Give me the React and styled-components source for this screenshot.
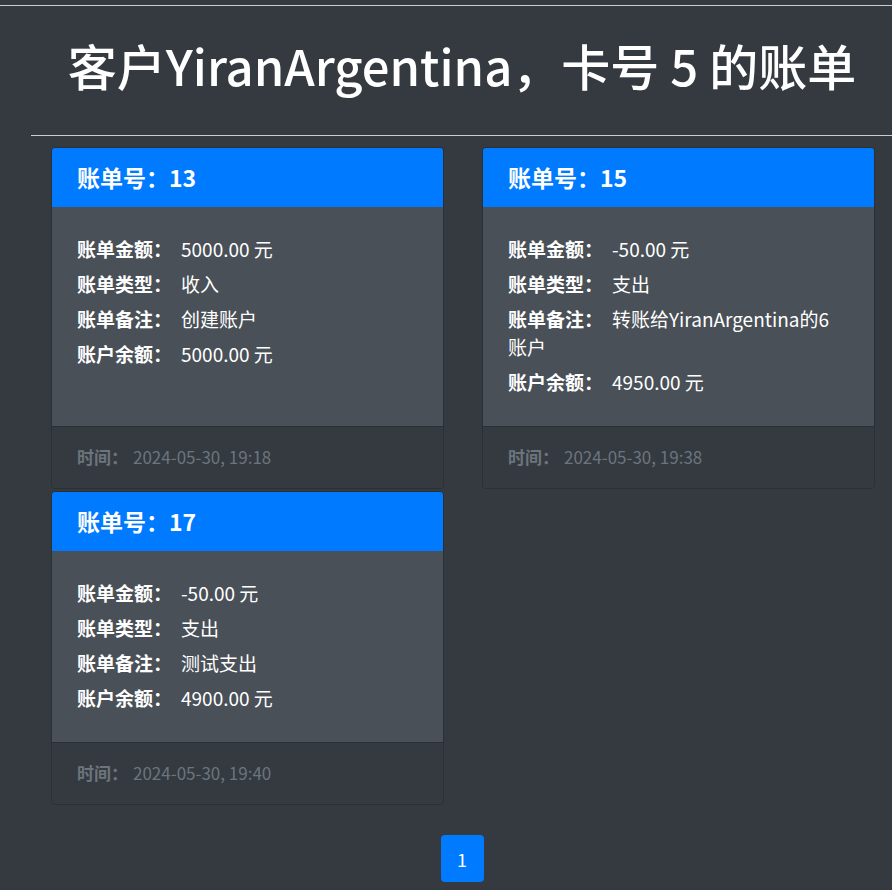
import React from 'react'
import styled, { createGlobalStyle } from 'styled-components'

const GlobalStyle = createGlobalStyle`
    html, body {
        margin: 0;
        padding: 0;
        background: #343a40;
        overflow-x: hidden;
    }
    body {
        font-family: "Noto Sans CJK SC", "Noto Sans", sans-serif;
        color: #fff;
        min-height: 890px;
    }
`

const TopRule = styled.div`
    margin-top: 5px;
    height: 1px;
    background: #c9ccd0;
`

const Container = styled.div`
    width: 862px;
    margin-left: 31px;
    box-sizing: border-box;
`

const Title = styled.h1`
    margin: 0;
    height: 129px;
    box-sizing: border-box;
    padding-bottom: 12px;
    display: flex;
    align-items: center;
    justify-content: center;
    font-size: 49px;
    font-weight: 500;
    line-height: 1;
    white-space: nowrap;
`

const Rule = styled.div`
    height: 1px;
    background: #c9ccd0;
`

const Grid = styled.div`
    display: grid;
    grid-template-columns: 393px 393px;
    column-gap: 38px;
    row-gap: 2px;
    padding: 11px 20px 0;
`

const Card = styled.div`
    display: flex;
    flex-direction: column;
    border: 1px solid #2b3035;
    border-radius: 4px;
    overflow: hidden;
`

const CardHeader = styled.div`
    background: #007bff;
    padding: 14px 25px;
    font-size: 23px;
    font-weight: 600;
    line-height: 31px;
`

const CardBody = styled.div`
    flex: 1;
    background: #495057;
    padding: 28px 36px 30px 25px;
    display: flex;
    flex-direction: column;
    gap: 7px;
`

const Row = styled.div`
    font-size: 19px;
    line-height: 28px;
`

const Label = styled.strong`
    font-weight: 700;
    margin-right: ${p => p.$gap ?? 9}px;
`

const CardFooter = styled.div`
    border-top: 1px solid #2b3035;
    background: #343a40;
    padding: 16px 25px 17px;
    font-size: 17px;
    line-height: 28px;
    color: #6c757d;
`

const Pager = styled.div`
    display: flex;
    justify-content: center;
    padding-top: 30px;
`

const PageButton = styled.button`
    width: 43px;
    height: 47px;
    border: none;
    border-radius: 4px;
    background: #007bff;
    color: #fff;
    font-family: inherit;
    font-size: 18px;
    padding: 0;
`

const bills = [
    { id: 13, amount: '5000.00 元', type: '收入', note: '创建账户', balance: '5000.00 元', time: '2024-05-30, 19:18' },
    { id: 15, amount: '-50.00 元', type: '支出', note: '转账给YiranArgentina的6账户', balance: '4950.00 元', time: '2024-05-30, 19:38' },
    { id: 17, amount: '-50.00 元', type: '支出', note: '测试支出', balance: '4900.00 元', time: '2024-05-30, 19:40' },
]

const BillCard = ({ bill }) => (
    <Card>
        <CardHeader>账单号：{bill.id}</CardHeader>
        <CardBody>
            <Row><Label>账单金额：</Label>{bill.amount}</Row>
            <Row><Label>账单类型：</Label>{bill.type}</Row>
            <Row><Label>账单备注：</Label>{bill.note}</Row>
            <Row><Label>账户余额：</Label>{bill.balance}</Row>
        </CardBody>
        <CardFooter><Label $gap={5}>时间：</Label>{bill.time}</CardFooter>
    </Card>
)

const App = () => {
    return (
        <>
            <GlobalStyle />
            <TopRule />
            <Container>
                <Title>客户YiranArgentina，卡号 5 的账单</Title>
                <Rule />
                <Grid>
                    {bills.map(b => <BillCard key={b.id} bill={b} />)}
                </Grid>
                <Pager>
                    <PageButton>1</PageButton>
                </Pager>
            </Container>
        </>
    )
}

export default App
